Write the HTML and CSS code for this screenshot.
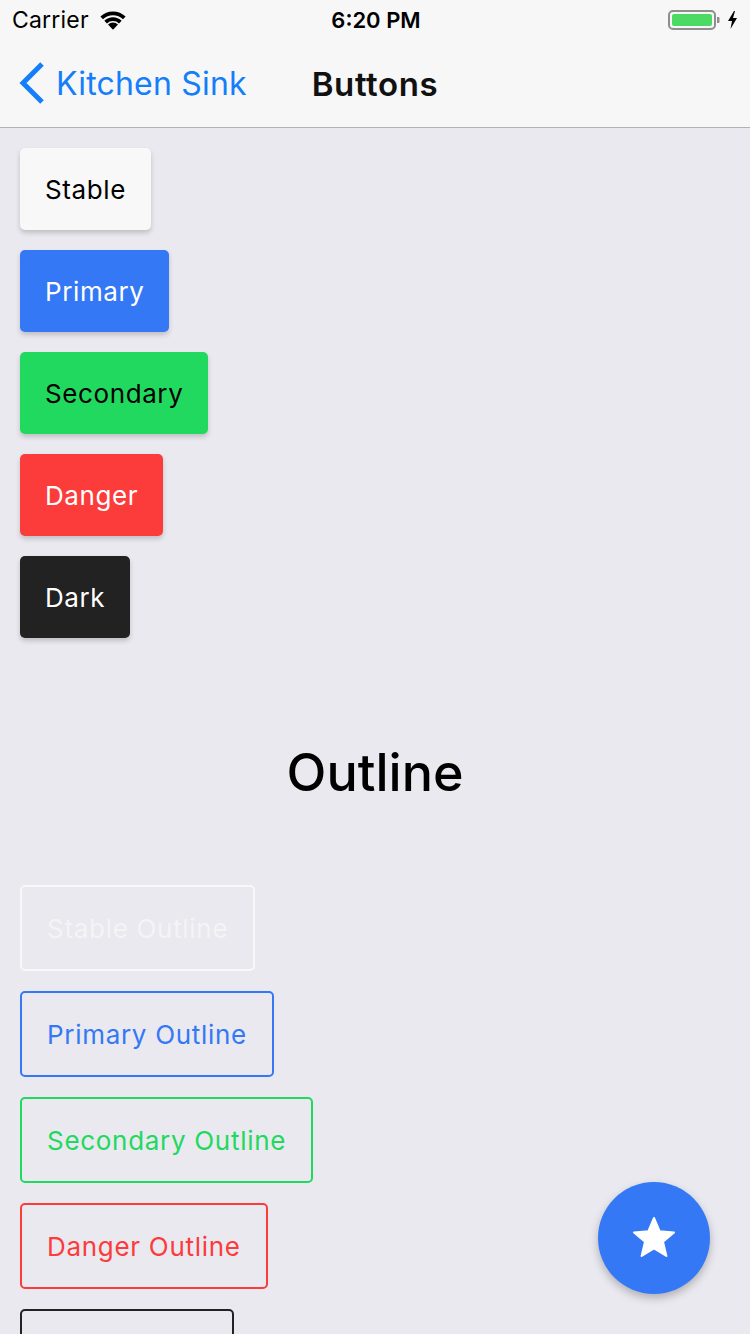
FILE: index.html
```html
<!DOCTYPE html>
<html>
<head>
<meta charset="utf-8">
<link rel="stylesheet" href="styles.css">
</head>
<body>
<div class="screen">
  <div class="statusbar">
    <div class="sb-left">
      <span class="carrier">Carrier</span>
      <svg class="wifi" width="28" height="20" viewBox="0 0 20 16">
        <path d="M10 15.8 L6.2 11.8 A5.4 5.4 0 0 1 13.8 11.8 Z" fill="#000"/>
        <path d="M3.4 8.9 A9.4 9.4 0 0 1 16.6 8.9 L14.6 11 A6.6 6.6 0 0 0 5.4 11 Z" fill="#000"/>
        <path d="M0.4 5.8 A13.6 13.6 0 0 1 19.6 5.8 L17.6 7.9 A10.8 10.8 0 0 0 2.4 7.9 Z" fill="#000"/>
      </svg>
    </div>
    <div class="time">6:20 PM</div>
    <div class="sb-right">
      <svg width="72" height="22" viewBox="0 0 72 22">
        <rect x="1" y="2" width="46" height="18" rx="4" fill="none" stroke="#8e8e8e" stroke-width="2"/>
        <rect x="4" y="5" width="40" height="12" rx="2" fill="#4cd964"/>
        <path d="M49 8 h1.5 a1 1 0 0 1 1 1 v4 a1 1 0 0 1 -1 1 h-1.5 z" fill="#8e8e8e"/>
        <path d="M66 2 L60 12 H64 L62.5 20 L69 9 H65 L67 2 Z" fill="#000"/>
      </svg>
    </div>
  </div>
  <div class="navbar">
    <div class="back">
      <svg width="28" height="42" viewBox="0 0 28 42">
        <path d="M24 2 L5 21 L24 40" fill="none" stroke="#147efb" stroke-width="5"/>
      </svg>
      <span class="back-text">Kitchen Sink</span>
    </div>
    <div class="title">Buttons</div>
  </div>
  <div class="content">
    <div class="btn-list">
      <div class="btn btn-stable">Stable</div>
      <div class="btn btn-primary">Primary</div>
      <div class="btn btn-secondary">Secondary</div>
      <div class="btn btn-danger">Danger</div>
      <div class="btn btn-dark">Dark</div>
    </div>
    <h1 class="heading">Outline</h1>
    <div class="btn-list">
      <div class="obtn o-stable">Stable Outline</div>
      <div class="obtn o-primary">Primary Outline</div>
      <div class="obtn o-secondary">Secondary Outline</div>
      <div class="obtn o-danger">Danger Outline</div>
      <div class="obtn o-dark">Dark Outline</div>
    </div>
  </div>
  <div class="fab">
    <svg width="46" height="44" viewBox="0 0 46 44">
      <path d="M23 2 L28.6 15.2 L43 16.4 L32 25.8 L35.4 40 L23 32.4 L10.6 40 L14 25.8 L3 16.4 L17.4 15.2 Z" fill="#fff" stroke="#fff" stroke-width="2" stroke-linejoin="round"/>
    </svg>
  </div>
</div>
</body>
</html>
```
FILE: styles.css
```css
html, body {
  margin: 0;
  padding: 0;
}
body {
  background: #e9e9ef;
  font-family: Inter, "Noto Sans", "Liberation Sans", sans-serif;
}
.screen {
  width: 750px;
  height: 1334px;
  position: relative;
  overflow: hidden;
  background: #e9e9ef;
}
.statusbar {
  height: 40px;
  background: #f7f7f7;
  display: flex;
  align-items: center;
  justify-content: space-between;
  padding: 0 10px 0 12px;
  position: relative;
}
.sb-left {
  display: flex;
  align-items: center;
  gap: 10px;
  width: 200px;
}
.carrier {
  font-size: 23px;
  color: #000;
  letter-spacing: 0.2px;
}
.wifi {
  width: 28px;
  height: 21px;
  margin-top: -1px;
}
.time {
  font-size: 22px;
  font-weight: 600;
  color: #000;
}
.sb-right {
  width: 200px;
  display: flex;
  justify-content: flex-end;
}
.navbar {
  height: 87px;
  background: #f7f7f7;
  border-bottom: 1px solid #b2b2b2;
  display: flex;
  align-items: center;
  justify-content: center;
  position: relative;
}
.back {
  position: absolute;
  left: 18px;
  top: 22px;
  display: flex;
  align-items: center;
  gap: 10px;
}
.back-text {
  font-size: 32px;
  color: #147efb;
  letter-spacing: 0.2px;
}
.title {
  font-size: 33px;
  font-weight: 600;
  color: #111;
  letter-spacing: 0.6px;
}
.content {
  padding: 20px 20px 0;
}
.btn-list {
  display: flex;
  flex-direction: column;
  align-items: flex-start;
  gap: 20px;
}
.btn {
  height: 82px;
  padding: 0 25px;
  display: flex;
  align-items: center;
  font-size: 26px;
  letter-spacing: 0.6px;
  border-radius: 5px;
  box-shadow: 0 3px 5px rgba(0, 0, 0, 0.18);
  box-sizing: border-box;
}
.btn-stable { background: #f8f8f8; color: #000; }
.btn-primary { background: #3478f6; color: #fff; }
.btn-secondary { background: #22d95f; color: #000; }
.btn-danger { background: #fc3b3b; color: #fff; }
.btn-dark { background: #222222; color: #fff; }
.heading {
  margin: 104px 0 81px;
  height: 62px;
  line-height: 62px;
  text-align: center;
  font-size: 52px;
  font-weight: 500;
  color: #000;
}
.obtn {
  height: 86px;
  padding: 0 25px;
  display: flex;
  align-items: center;
  font-size: 26px;
  letter-spacing: 0.7px;
  border: 2px solid;
  border-radius: 5px;
  box-sizing: border-box;
}
.o-stable { border-color: #f8f8f8; color: #f4f4f6; }
.o-primary { border-color: #3478f6; color: #3478f6; }
.o-secondary { border-color: #22d95f; color: #22d95f; }
.o-danger { border-color: #fc3b3b; color: #fc3b3b; }
.o-dark { border-color: #222222; color: #222222; }
.fab {
  position: absolute;
  left: 598px;
  top: 1182px;
  width: 112px;
  height: 112px;
  border-radius: 50%;
  background: #3478f6;
  box-shadow: 0 4px 8px rgba(0, 0, 0, 0.25);
  display: flex;
  align-items: center;
  justify-content: center;
}
```
